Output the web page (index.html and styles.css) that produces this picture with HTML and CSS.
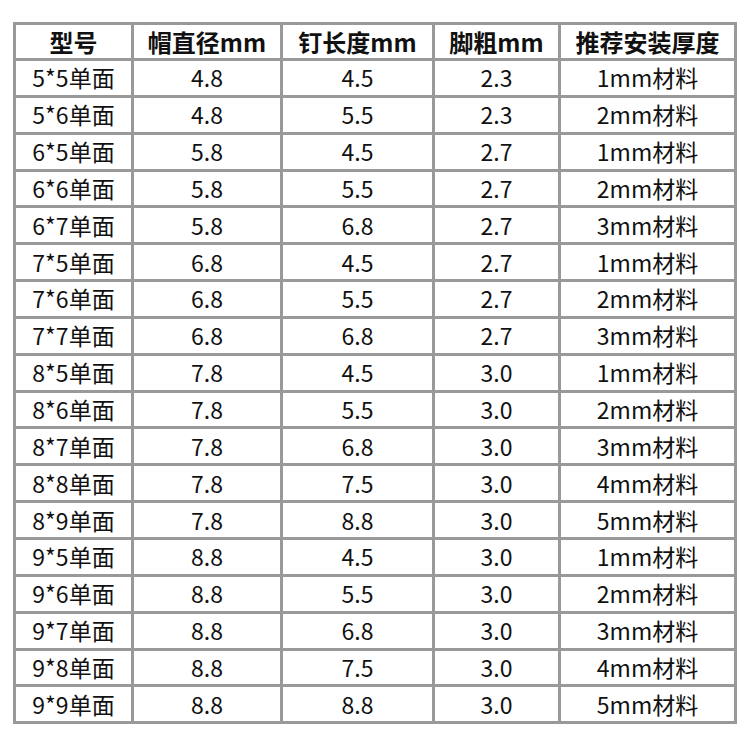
FILE: index.html
```html
<!DOCTYPE html>
<html lang="zh">
<head>
<meta charset="utf-8">
<link rel="stylesheet" href="styles.css">
</head>
<body>
<table class="spec">
  <colgroup>
    <col class="c1"><col class="c2"><col class="c3"><col class="c4"><col class="c5">
  </colgroup>
  <thead>
    <tr class="head"><th>型号</th><th>帽直径mm</th><th>钉长度mm</th><th>脚粗mm</th><th>推荐安装厚度</th></tr>
  </thead>
  <tbody>
    <tr><td>5*5单面</td><td>4.8</td><td>4.5</td><td>2.3</td><td>1mm材料</td></tr>
    <tr><td>5*6单面</td><td>4.8</td><td>5.5</td><td>2.3</td><td>2mm材料</td></tr>
    <tr><td>6*5单面</td><td>5.8</td><td>4.5</td><td>2.7</td><td>1mm材料</td></tr>
    <tr><td>6*6单面</td><td>5.8</td><td>5.5</td><td>2.7</td><td>2mm材料</td></tr>
    <tr><td>6*7单面</td><td>5.8</td><td>6.8</td><td>2.7</td><td>3mm材料</td></tr>
    <tr><td>7*5单面</td><td>6.8</td><td>4.5</td><td>2.7</td><td>1mm材料</td></tr>
    <tr><td>7*6单面</td><td>6.8</td><td>5.5</td><td>2.7</td><td>2mm材料</td></tr>
    <tr><td>7*7单面</td><td>6.8</td><td>6.8</td><td>2.7</td><td>3mm材料</td></tr>
    <tr><td>8*5单面</td><td>7.8</td><td>4.5</td><td>3.0</td><td>1mm材料</td></tr>
    <tr><td>8*6单面</td><td>7.8</td><td>5.5</td><td>3.0</td><td>2mm材料</td></tr>
    <tr><td>8*7单面</td><td>7.8</td><td>6.8</td><td>3.0</td><td>3mm材料</td></tr>
    <tr><td>8*8单面</td><td>7.8</td><td>7.5</td><td>3.0</td><td>4mm材料</td></tr>
    <tr><td>8*9单面</td><td>7.8</td><td>8.8</td><td>3.0</td><td>5mm材料</td></tr>
    <tr><td>9*5单面</td><td>8.8</td><td>4.5</td><td>3.0</td><td>1mm材料</td></tr>
    <tr><td>9*6单面</td><td>8.8</td><td>5.5</td><td>3.0</td><td>2mm材料</td></tr>
    <tr><td>9*7单面</td><td>8.8</td><td>6.8</td><td>3.0</td><td>3mm材料</td></tr>
    <tr><td>9*8单面</td><td>8.8</td><td>7.5</td><td>3.0</td><td>4mm材料</td></tr>
    <tr><td>9*9单面</td><td>8.8</td><td>8.8</td><td>3.0</td><td>5mm材料</td></tr>
  </tbody>
</table>
</body>
</html>
```
FILE: styles.css
```css
html, body {
  margin: 0;
  padding: 0;
  background: #ffffff;
}
body {
  padding: 22px 0 0 13px;
  font-family: "Noto Sans CJK SC", "Noto Sans", sans-serif;
  color: #111111;
}
.spec {
  border-collapse: separate;
  border-spacing: 0;
  table-layout: fixed;
  width: 724px;
  border-top: 3px solid #999999;
  border-left: 3px solid #999999;
}
.c1 { width: 118px; }
.c2 { width: 149px; }
.c3 { width: 152px; }
.c4 { width: 126px; }
.c5 { width: 176px; }
.spec th,
.spec td {
  box-sizing: border-box;
  border-right: 3px solid #999999;
  border-bottom: 3px solid #999999;
  padding: 0;
  text-align: center;
  vertical-align: middle;
  font-size: 23px;
  line-height: 1;
  white-space: nowrap;
}
.spec th {
  height: 36px;
  font-weight: 700;
  font-size: 24px;
}
.spec td {
  height: 36.85px;
  font-weight: 400;
}
```
